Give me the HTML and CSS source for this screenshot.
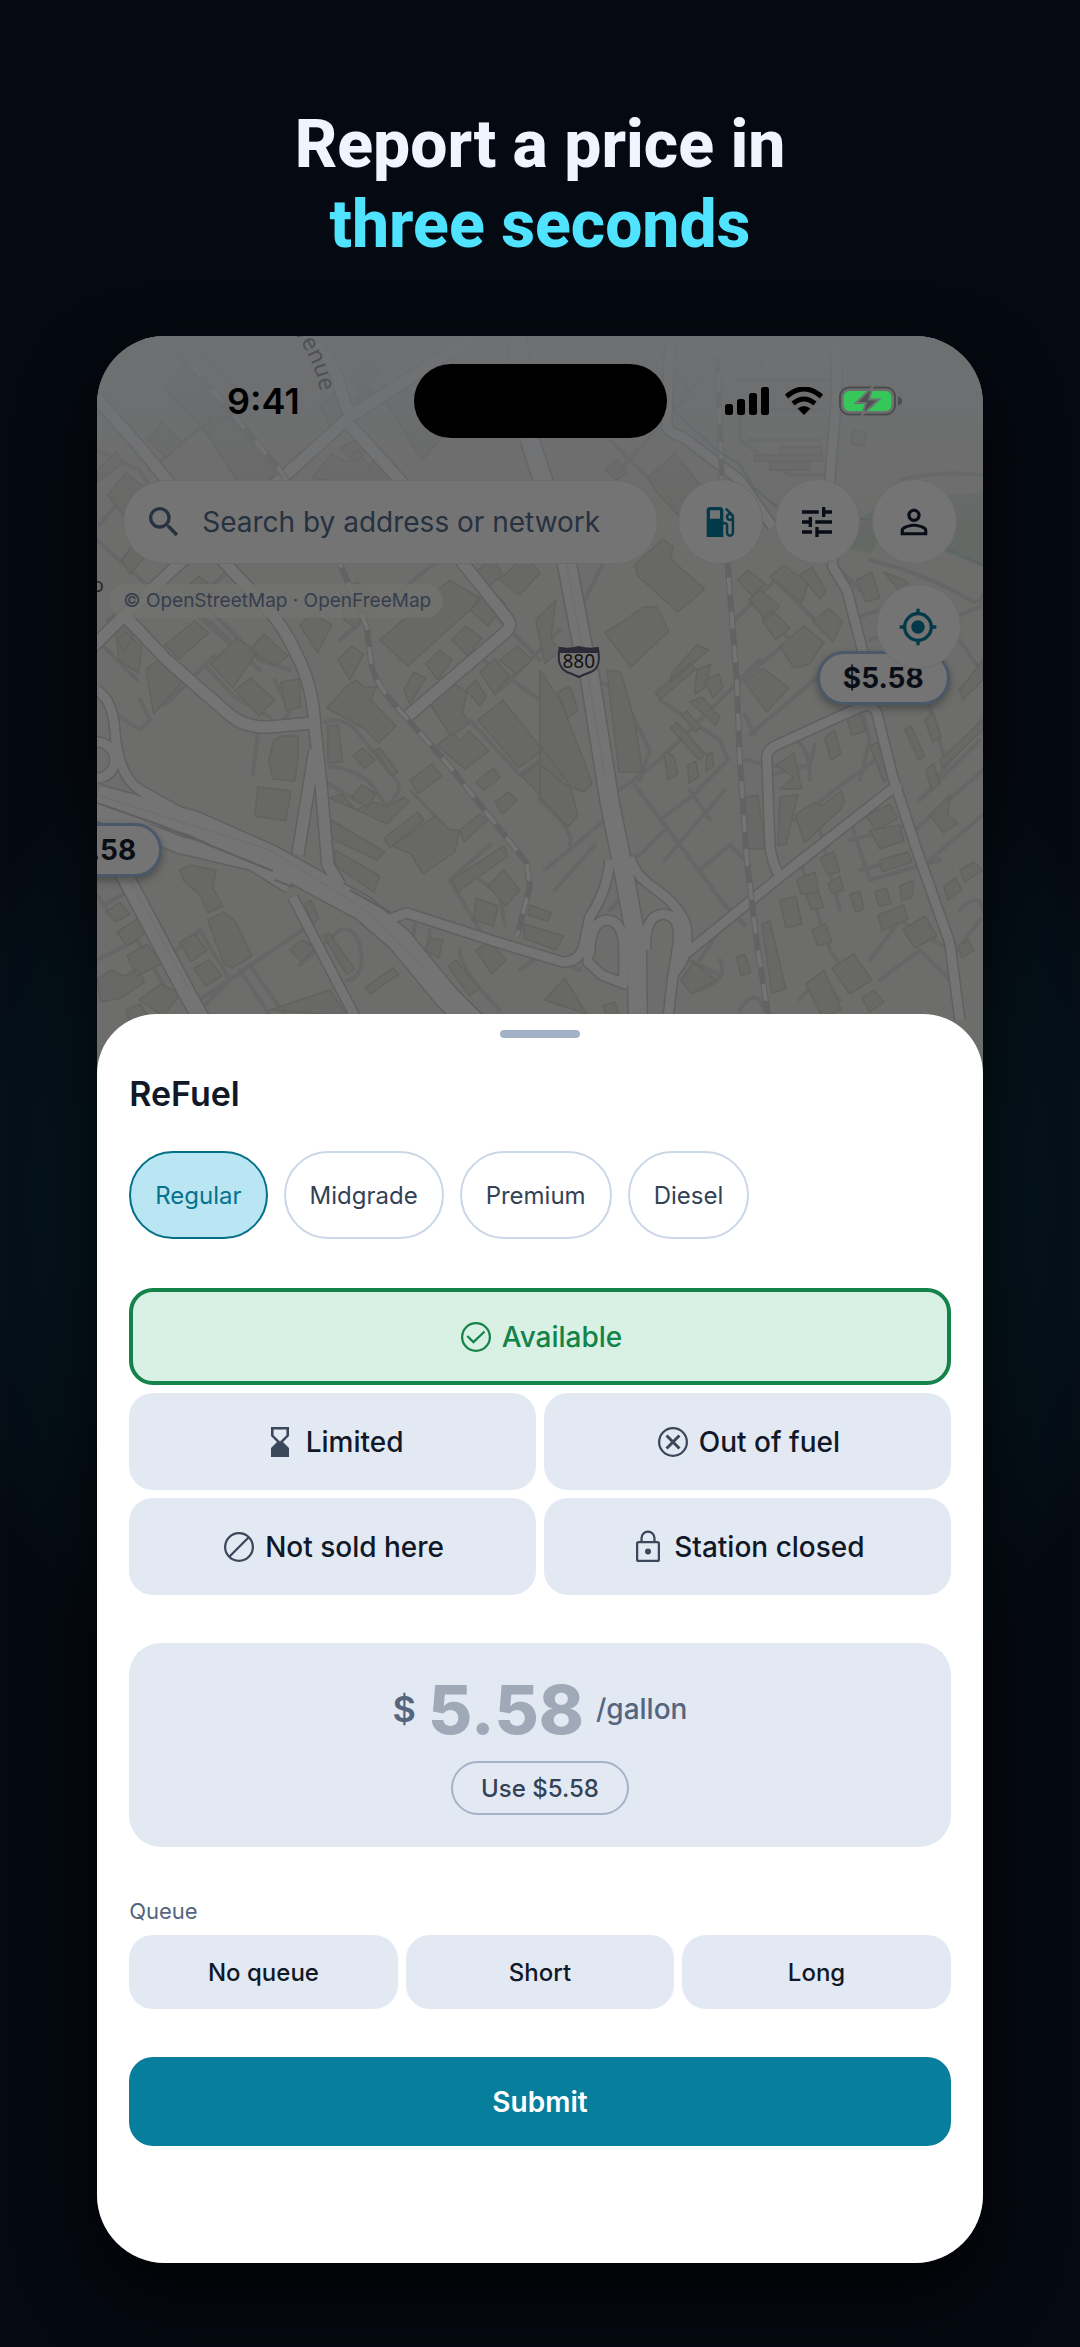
FILE: index.html
```html
<!DOCTYPE html>
<html lang="en">
<head>
<meta charset="utf-8">
<meta name="viewport" content="width=device-width, initial-scale=1">
<title>ReFuel – Report a price</title>
<link rel="stylesheet" href="styles.css">
</head>
<body>
<main class="promo">
  <h1 class="headline">Report a price in<br><span class="headline-accent">three seconds</span></h1>

  <div class="phone">
    <svg class="map" viewBox="97 336 886 760" preserveAspectRatio="xMidYMin slice" aria-hidden="true">
      <defs>
        <linearGradient id="fade" x1="0" y1="0" x2="0" y2="1">
          <stop offset="0" stop-color="#6e7073" stop-opacity=".9"/>
          <stop offset=".5" stop-color="#6e7073" stop-opacity=".5"/>
          <stop offset="1" stop-color="#6e7073" stop-opacity="0"/>
        </linearGradient>
        <!-- main streets, drawn once as casing and once as surface -->
        <g id="streets">
          <path class="street" d="M97 397L113 417 140 447 167 480 225 563 262 602Q285 627 297 655 313 685 315 727L322 793 328 865 340 885M90 650L127 613 180 563 280 480 350 417 473 337M350 425L400 480 463 563 507 618Q513 625 506 632L450 680 407 717M350 415Q340 390 337 375L313 337M127 618L167 660 230 715Q245 728 270 727L312 723M315 750L298 855"/>
          <path class="ramp" d="M97 690Q113 700 115 730 118 775 140 790L180 812M293 897L357 1020M97 742a16 16 0 0 1 0 36M387 920L407 913 500 943 563 962Q580 962 584 945L590 917Q608 890 610 860M630 857Q634 873 650 885 684 908 687 930L687 947Q685 960 673 975L668 1020M687 953L780 877 900 783M780 877Q771 860 770 843L767 758Q767 750 775 746L860 707Q872 702 877 713L893 777 917 850 950 943 960 1020M837 340L837 393 830 480 833 567 847 590 873 690M670 340L667 425Q667 433 683 437L740 480 773 527M590 955Q590 920 608 920 624 922 624 950L624 985M590 930L588 962 602 975 628 985M646 950Q644 915 664 914 682 916 678 945L672 985"/>
          <path class="avenue" d="M123 872L187 993 205 1025M97 812L180 845 253 862 290 885"/>
          <path class="highway" d="M97 797L193 823 270 857 320 885 363 908 400 940 447 997 485 1035"/>
          <path class="freeway" d="M517 337L530 440 543 480 567 563 583 647 590 677 610 803 623 867 637 943 638 1025"/>
        </g>
      </defs>

      <rect x="97" y="336" width="886" height="760" fill="#6d6d6b"/>
      <path fill="#656966" d="M860 520l20-16 103-12v75l-60-25-40-10-12 22-20-5z"/>

      <!-- service roads -->
      <g fill="none" stroke="#666" stroke-width="4" stroke-linecap="round" stroke-linejoin="round">
        <path d="M150 470L215 415 240 390M165 340L240 425 290 480M97 450L140 470 170 520M120 500l-20 25M230 470l20-35M190 340l60 60M97 540l50 45M140 700l10 20-10 10-30-20M165 705l50-50M205 665l30 32 35 20M258 735l-5 40M325 722q15-5 28 5l45 55q3 8-3 15-10 15-30 8l-38-22M330 767q15-2 40 15l15 22M97 895l15 20M105 905l25-15M97 960l40-20 30 50M165 960l35-30 30 50-30 30M200 1000l110-75M240 970l30 45M250 965l35 50M300 965l40-35q20-5 22 30-2 20-15 20M97 640l40 40M200 600l60 60 30 10M180 600l80 70M230 570l-40 35 40 35M275 680l15 30-10 20M340 640l40-35M390 600l60-50M400 660l50-60M480 600l60 60M500 690l60-60M540 700l-70-50M470 720l50 55 40-30M450 880l40-35M450 880l30 50M480 880l20 15 5 30M460 950q0 20 40 60M410 960l5-35M430 930l-5 40M520 970l20-15 40 15"/>
        <path d="M620 470l45-50 35-40M600 430l60 60 40 50M540 560l50-40M580 610l30-60M595 680l25 10 30 60-10 30M620 790l40-30 100-100M635 785l90 120 20 20M620 850q15 15 30-5l15-15M660 820l40-30M640 880l-30 30M545 870l60-50M555 890l40-45M540 800q35 30 30 45M700 960l20-30M700 990q30-10 20-30M660 700l60 40 8 20-30 30M690 790l20 30M725 790l-60 70M700 870l30-25 20 20M740 910l20-15M735 620l40-40 40 40M750 600l50 50M730 690l60-50M750 735l70-60M755 735l-10-20M770 775l40-10 5-20M745 760l40 8M790 740q20 0 20 40M795 820l80-60M860 780l10-40M870 740l-10-40M800 860l30 90 10 15M820 830l20 80M850 820l20 60 70-20M850 840l60-15M860 870l40-10M870 640l80-30M850 620l60-20 40 20 33-15M860 590l-30-30M900 480q40-10 83-5M860 530l40-20M870 560q60 15 100 40 10 5 13-5M920 800l60-60M915 830l68-60M930 860l53-45M925 690l20 70M935 780l48-60M960 640l20 30-20 20M870 960l30-40 50 30M880 980l40-30 40 40M800 1000q20-30 40 0M740 1010q15-25 25 0M690 960l30 15M960 910q20-20 23 0M950 960l30-40M690 390l-30-40M740 380h100M740 400v40l50 35h40M760 370v-30M740 410h85M750 440h70"/>
      </g>

      <!-- buildings -->
      <g fill="#686866" stroke="#62625f" stroke-width="1.5" stroke-linejoin="round">
        <path d="M163 387l22-22 46 46-22 24zM203 428l18-22 54 66-24 28zM148 440l14-18 20 20-15 16zM108 495l18-22 26 20-22 30zM97 470l20-18 6 12-26 18zM320 405l15-12 12 25-15 12zM350 375l20-15 10 12-20 18zM355 400l14-14 8 8-12 16zM385 400l22-12 45 40-30 32zM312 478l20-24 14 8 12-12 12 16 8-10 14 24-20 6zM340 448l18-10 10 14-14 10zM107 620l17-14 16 18-16 28zM122 560l10-14 12 12-14 16zM165 645l30-24 14 12-30 26zM117 640l10-7 15 14-3 26-20-12zM146 670l12-10 24 22-28 32zM211 664l26-26 20 14-24 36zM235 690l16-12 24 22-16 16zM250 650l14-16 24 22-12 10zM300 625l12-12 20 12-14 28zM183 590l16-14 20 16-16 18zM340 590l18-8 18 18-20 28-12-8zM380 640l70-60 30 18-12 14-60 54zM338 660l14-14 12 8-14 26zM452 640l14-14 16 12-14 18zM426 664l14-14 12 10-14 20zM470 610l20-20 16 14-18 22zM473 575l20-18 10 18-18 14zM500 580l25-25 15 18-20 22zM281 682l18-3 2 28-15 3zM327 708l20-22 10-6 8 8 12-2-6 14 25 26-17 17-14-14zM274 740l8-4h16v24l-3 21-22-2-4-18zM258 787l33 4-5 30-31-5zM328 726l10-1 5 37-15 1zM353 756l10-8 12 12-10 8zM375 750l5-2 18 24-6 4zM352 797l10-12 14 9-8 14zM330 798l12-4 14 16 18-8 14 5 16-10 5 5-22 22-30-14zM331 820l54 32-8 8-46-22zM335 850l45 26-6 16-38-26zM384 838l34-26 6 8-34 28zM410 790l40 40 10 0-5 22-32 22-12-20-18-8 42-30zM410 780l22-16 10 12-24 18zM460 830l20-16 8 6-24 22zM476 782l18-14 6 10-16 12zM495 802l14-10 8 8-14 14zM437 745l16-12 8 8 8-10 20 20-24 18zM478 720l25-20 40 50-24 18zM522 776l18-14 20 40-8 6zM429 702l26-18 12 8-4 20 6 12-18 12zM404 690l10-18 12 6-16 26zM466 690l10-10 10 16-6 10zM480 672l15-13 14 16-14 20zM500 660l18-14 14 14-16 14zM180 870l10-5 26 5-3 18 10 18-15 7-8-18-16-14zM208 920l16-8 12 10 16 34-20 12-8-4zM180 942l15-8 12 16-16 12zM194 968l16-8 12 16-16 10zM106 912l14-10 10 12-14 8zM117 932l22-14 10 6-4 10-18 12zM127 956l20-12 8 10 10 8-28 14zM97 980l14-10 14 6 12-8 8 14-24 16-20 4zM139 1000l22-16 20 10-18 22zM126 1010l14-6 8 12-18 6zM305 904l6-4 8 18-6 6zM324 936l5-3 26 36-8 6zM290 950l12-10 14 8-14 14zM270 1010l60-20 18 26zM452 880l52-34 4 10-50 36zM488 886l16-16 16 20-14 16zM476 898l22 8-4 20-20-6zM476 950l14-8 16 18-14 14zM448 966l8-6 24 28-10 8zM425 950l6-12 12 2-4 18zM365 988l28-20 6 6-28 20zM530 905l22 8-4 8-20-6zM524 924l40 12-8 14-32-12z"/>
        <path d="M649 477l26-24 30 38 8 0 18 24-25 30-52-56zM605 470l12-10 10 12-10 8zM635 565l28-26 10 8-2 12 34 30-27 23-40-36zM605 633l22-14 16-12h14l12 24-38 36zM536 620l20-20-5 40 10 10-16 14zM672 673l25-28 12 5-38 32zM655 693l35-30 6 6-35 30zM697 670l14-6-6 24-10 6zM738 580l10-10 18 14-14 12zM750 600l10-10 20 16-14 14zM762 620l10-10 18 18-14 12zM770 577l14-12 24 18-6 20zM813 622l16-14 14 14-10 20zM780 646l24-20 20 16-14 22-16 4zM800 575l12-8 14 24-6 8zM857 580l15-8 8 26-14 4zM884 572l20 8 18 18-20-4zM607 670l14 2 14 50 8 50-24 0zM540 670l20 30 24 60 8 24-8 8-20-8-24-20zM540 745l30 40 8 30-10 12-28-30zM558 692l12-6 8 24-10 8zM690 702l12-5 18 20-4 8zM705 680l14-6 4 14-10 10zM745 682l18-14 26 20-22 24zM671 728l6-6 28 32-6 6zM682 715l5-4 14 16-5 5zM664 752l10 4 4 18-10 6zM688 765l8-4 3 16-10 6zM707 755l5-3 2 14-8 6zM746 797l12-2 8 54h-18l-4-30zM776 765l18-12 8 36h-22l14-12zM780 797l18-2-12 50h-8zM795 815l18-12 10 2 18-14 4 10-4 8-36 34zM825 738l10-8 6 24-10 6zM846 716l14-5 6 20-14 4zM870 746l8-4 12 36-6 4zM866 816l24-12 8 14-22 12zM870 830l30-5 4 16-24 8zM880 860l28-8 4 10-30 10zM820 858l14-6 6 20-12 2zM797 880l18-8 4 20-18 2zM806 895l12-4 6 16-12 3zM828 884l12-8 4 14-12 3zM850 895l10-4 4 18-8 3zM875 892l12-4 4 16-12 2zM900 886l14-6-2 18-10 2zM780 900l16-4 6 28-16 4zM812 930l14-6 6 18-14 4zM878 915l26-10 4 14-26 12zM903 930l22-14 12 20-22 12zM832 968l22-14 18 26-22 14zM862 998l12-8 10 12-14 10zM806 984l18-14 18 40-20 6zM737 957l8-3 6 18-10 4zM762 924l8-3 16 68-14 4zM681 980l13-18 22 18-24 14zM545 1000l20-22 22 36zM603 1006l12-4 4 14h-12zM926 770l8-6 6 20-8 6zM930 815l20-20-2 20 10 8-14 10zM944 886l12-8 6 12-14 10zM960 870l14-8 9 8-18 12zM958 946l10-6 6 10-12 8zM755 455h68v6h-68zM780 455h42v-8h-42zM852 430l14 2-2 14-12-2zM770 470h40v-8h-40zM905 730l6-4 14 30-6 4zM925 720l8-8 8 24-8 6zM960 690l23-30v20l-20 20zM940 760l43-40v10l-40 38z"/>
      </g>

      <use class="casing" href="#streets"/>
      <use class="surface" href="#streets"/>
      <path fill="none" stroke="#6d6d6d" d="M97 795L270 850 363 908 430 975M566 560L588 677 606 780M130 880L190 990"/>
      <path fill="none" stroke="#5f5f5f" stroke-width="2" d="M97 803L160 825 273 871M275 880l18 7M350 890l40 22"/>

      <!-- railways -->
      <g fill="none">
        <path stroke="#626262" stroke-width="6" d="M717 340L722 480 728 567 737 680 740 760 747 860 757 943 770 1025M190 363L280 470 340 563 367 627 371 660Q373 680 395 705L447 763 527 863 530 887 517 937"/>
        <path stroke="#747474" stroke-width="4" stroke-dasharray="17 17" d="M717 340L722 480 728 567 737 680 740 760 747 860 757 943 770 1025M190 363L280 470 340 563 367 627 371 660Q373 680 395 705L447 763 527 863 530 887 517 937"/>
        <path stroke="#59656a" stroke-width="2" d="M673 410L717 450 738 463Q748 475 753 487L777 507 870 520 950 550 983 565"/>
      </g>

      <rect x="97" y="336" width="886" height="190" fill="url(#fade)"/>
      <path id="avenue" fill="none" d="M284 322Q314 350 322 400"/>
      <text class="map-label" fill="#505153" font-size="23"><textPath href="#avenue" startOffset="14">venue</textPath></text>
      <text class="map-label" fill="#2a2a2a" font-size="20" x="92" y="592">o</text>

      <path fill="#747474" stroke="#2b2b38" stroke-width="2" d="M560 648q8 3 19 0 11 3 19 0 4 20-7 24-8 3-12 5-6-3-12-5-11-6-7-24z"/>
      <path fill="#2b2b38" d="M560 647q9 2 19-1 10 3 19 1l1 6h-40z"/>
      <text class="map-label" fill="#111" font-size="19" x="579" y="668" text-anchor="middle">880</text>
    </svg>

    <div class="price-pin pin-right">$5.58</div>
    <div class="price-pin pin-left">$5.58</div>

    <header class="map-header">
      <div class="status-bar">
        <div class="status-side status-time">9:41</div>
        <div class="island"></div>
        <div class="status-side status-icons">
          <svg width="44" height="28" viewBox="0 0 44 28" aria-hidden="true">
            <rect y="17" width="8" height="11" rx="2.5"/><rect x="12" y="12" width="8" height="16" rx="2.5"/><rect x="24" y="6" width="8" height="22" rx="2.5"/><rect x="36" width="8" height="28" rx="2.5"/>
          </svg>
          <svg width="40" height="28" viewBox="0 0 40 28" aria-hidden="true">
            <g fill="none" stroke="#000" stroke-width="5"><path d="M2.500 9.500Q20-5.500 37.500 9.500"/><path d="M9 16.500Q20 7.500 31 16.500"/></g>
            <path d="M13.500 21.500q6.500-5 13 0L20 28z"/>
          </svg>
          <svg width="63" height="30" viewBox="0 0 63 30" aria-hidden="true">
            <rect x="1" y="1.500" width="55" height="27" rx="9" fill="none" stroke="#4b4c4d" stroke-width="2"/>
            <path d="M59 10.500q4 1 4 4.500t-4 4.500z" fill="#4b4c4d"/>
            <rect x="4.500" y="5" width="48" height="20" rx="6" fill="#35c759"/>
            <path d="M33.500 1L17 17h10l-4 12L40 13.500H30z" fill="#4f5051" stroke="#6f7071" stroke-width="2"/>
          </svg>
        </div>
      </div>

      <div class="search-row">
        <label class="search">
          <svg class="icon" viewBox="0 0 24 24" aria-hidden="true"><path d="M15.500 14h-.79l-.28-.27A6.471 6.471 0 0 0 16 9.500 6.500 6.500 0 1 0 9.500 16c1.610 0 3.090-.59 4.230-1.570l.27.28v.79l5 4.990L20.490 19l-4.990-5zm-6 0C7.010 14 5 11.990 5 9.500S7.010 5 9.500 5 14 7.010 14 9.500 11.990 14 9.500 14z"/></svg>
          <input class="search-input" type="search" placeholder="Search by address or network" aria-label="Search by address or network">
        </label>
        <button class="round-button accent" type="button" aria-label="Fuel type">
          <svg class="icon" viewBox="0 0 24 24" aria-hidden="true"><path d="M19.770 7.230l.01-.01-3.720-3.720L15 4.560l2.110 2.110c-.94.36-1.610 1.260-1.610 2.330 0 1.380 1.120 2.500 2.500 2.500.36 0 .69-.08 1-.21v7.210c0 .55-.45 1-1 1s-1-.45-1-1V14c0-1.100-.9-2-2-2h-1V5c0-1.100-.9-2-2-2H6c-1.100 0-2 .9-2 2v16h10v-7.500h1.500v5c0 1.380 1.120 2.500 2.500 2.500s2.500-1.120 2.500-2.500V9c0-.69-.28-1.320-.73-1.770zM12 10H6V5h6v5zm6 0c-.55 0-1-.45-1-1s.45-1 1-1 1 .45 1 1-.45 1-1 1z"/></svg>
        </button>
        <button class="round-button" type="button" aria-label="Filters">
          <svg class="icon" viewBox="0 0 24 24" aria-hidden="true"><path d="M3 17v2h6v-2H3zM3 5v2h10V5H3zm10 16v-2h8v-2h-8v-2h-2v6h2zM7 9v2H3v2h4v2h2V9H7zm14 4v-2H11v2h10zm-6-4h2V7h4V5h-4V3h-2v6z"/></svg>
        </button>
        <button class="round-button" type="button" aria-label="Profile">
          <svg class="icon" viewBox="0 0 24 24" aria-hidden="true"><path d="M12 5.900c1.160 0 2.100.94 2.100 2.100s-.94 2.100-2.100 2.100S9.900 9.160 9.900 8s.94-2.100 2.100-2.100m0 9c2.970 0 6.100 1.460 6.100 2.100v1.100H5.900V17c0-.64 3.130-2.100 6.100-2.100M12 4C9.790 4 8 5.790 8 8s1.790 4 4 4 4-1.790 4-4-1.790-4-4-4zm0 9c-2.670 0-8 1.340-8 4v3h16v-3c0-2.660-5.330-4-8-4z"/></svg>
        </button>
      </div>

      <div class="map-tools">
        <p class="attribution">© OpenStreetMap · OpenFreeMap</p>
        <button class="round-button accent" type="button" aria-label="My location">
          <svg class="icon" viewBox="0 0 24 24" aria-hidden="true"><path d="M12 8c-2.210 0-4 1.790-4 4s1.790 4 4 4 4-1.790 4-4-1.790-4-4-4zm8.940 3A8.994 8.994 0 0 0 13 3.060V1h-2v2.060A8.994 8.994 0 0 0 3.060 11H1v2h2.060A8.994 8.994 0 0 0 11 20.940V23h2v-2.060A8.994 8.994 0 0 0 20.940 13H23v-2h-2.060zM12 19c-3.870 0-7-3.130-7-7s3.130-7 7-7 7 3.130 7 7-3.130 7-7 7z"/></svg>
        </button>
      </div>
    </header>

    <form class="sheet">
      <div class="handle"></div>
      <h2 class="station">ReFuel</h2>

      <div class="grades" role="group" aria-label="Fuel grade">
        <button class="chip chip-selected" type="button" aria-pressed="true">Regular</button>
        <button class="chip" type="button" aria-pressed="false">Midgrade</button>
        <button class="chip" type="button" aria-pressed="false">Premium</button>
        <button class="chip" type="button" aria-pressed="false">Diesel</button>
      </div>

      <div class="states" role="group" aria-label="Availability">
        <button class="state state-selected" type="button" aria-pressed="true">
          <svg class="state-icon" viewBox="0 0 24 24" aria-hidden="true"><circle cx="12" cy="12" r="9.250"/><path d="M6.200 11.300l4.100 4.100 7.400-7.100"/></svg>
          Available
        </button>
        <button class="state" type="button" aria-pressed="false">
          <svg class="state-icon" viewBox="0 0 24 24" aria-hidden="true"><path class="solid" d="M18 22v-6l-4-4 4-4V2H6v6l4 4-4 4v6zM7.700 7.500V3.700h8.600v3.800L12 11.700z"/></svg>
          Limited
        </button>
        <button class="state" type="button" aria-pressed="false">
          <svg class="state-icon" viewBox="0 0 24 24" aria-hidden="true"><circle cx="12" cy="12" r="9.250"/><path class="bold" d="M7.700 7.700l8.600 8.600M16.300 7.700l-8.600 8.600"/></svg>
          Out of fuel
        </button>
        <button class="state" type="button" aria-pressed="false">
          <svg class="state-icon" viewBox="0 0 24 24" aria-hidden="true"><circle cx="12" cy="12" r="9.250"/><path d="M5.500 18.500l13-13"/></svg>
          Not sold here
        </button>
        <button class="state" type="button" aria-pressed="false">
          <svg class="state-icon" viewBox="0 0 24 24" aria-hidden="true"><rect x="4.750" y="8.750" width="14.500" height="12.500" rx="1"/><path d="M7.700 8.700V6a4.300 4.300 0 0 1 8.600 0v2.700"/><circle class="solid" cx="12" cy="15" r="2"/></svg>
          Station closed
        </button>
      </div>

      <div class="price-card">
        <label class="price-line">
          <span class="currency">$</span>
          <input class="price-input" type="text" inputmode="decimal" placeholder="5.58" aria-label="Price per gallon">
          <span class="unit">/gallon</span>
        </label>
        <button class="use-price" type="button">Use $5.58</button>
      </div>

      <div class="queue-title" id="queue-title">Queue</div>
      <div class="queue" role="group" aria-labelledby="queue-title">
        <button class="queue-option" type="button">No queue</button>
        <button class="queue-option" type="button">Short</button>
        <button class="queue-option" type="button">Long</button>
      </div>

      <button class="submit" type="submit">Submit</button>
    </form>
  </div>
</main>
</body>
</html>
```

FILE: styles.css
```css
* { box-sizing: border-box; }

body {
  margin: 0;
  background: #050911;
  font-family: Inter, "Liberation Sans", sans-serif;
  color: #111827;
}

button, input { font: inherit; color: inherit; }
button { margin: 0; padding: 0; border: 0; cursor: pointer; }

.promo {
  padding: 105px 9% 84px;
  background: radial-gradient(ellipse 62% 26% at 50% 51%, #04202b 0%, #04171f 60%, #050911 100%);
}

.headline {
  margin: 0 0 71px;
  font: 800 66px/80px Roboto, "Liberation Sans", sans-serif;
  text-align: center;
  color: #eff4ff;
}
.headline-accent { color: #4fe3ff; }

.phone {
  position: relative;
  overflow: hidden;
  border-radius: 68px;
  background: #6d6d6b;
  box-shadow: 0 32px 72px rgba(0, 0, 0, .8);
}

/* map */
.map {
  position: absolute;
  top: 0;
  left: 0;
  width: 100%;
  height: 760px;
}
.map-label { font-family: "Noto Sans", sans-serif; }

.casing, .surface { fill: none; stroke-linejoin: round; }
.casing { --edge: 3px; stroke: #606060; }
.surface { --edge: 0px; stroke: #747474; }
.street { stroke-width: calc(11px + var(--edge)); }
.ramp { stroke-width: calc(9px + var(--edge)); }
.avenue { stroke-width: calc(16px + var(--edge)); }
.highway { stroke-width: calc(24px + var(--edge)); }
.freeway { stroke-width: calc(18px + var(--edge)); }

.price-pin {
  position: absolute;
  width: 133px;
  height: 54px;
  border: 3px solid #4b586a;
  border-radius: 27px;
  background: #747474;
  box-shadow: 0 4px 8px rgba(0, 0, 0, .3);
  font-size: 28px;
  font-weight: 700;
  line-height: 48px;
  text-align: center;
  color: #090d15;
}
.pin-right { top: 315px; right: 33px; }
.pin-left { top: 487px; left: -68px; }

.map-header {
  position: relative;
  min-height: 678px;
  padding: 28px 26px 0;
}

.status-bar {
  display: grid;
  grid-template-columns: minmax(0, 1fr) 253px minmax(0, 1fr);
  align-items: center;
  height: 74px;
  margin-bottom: 41px;
}
.status-side {
  display: flex;
  align-items: center;
  justify-content: center;
}
.status-time {
  padding-right: 10px;
  font-size: 36px;
  font-weight: 600;
  color: #000;
}
.status-icons { gap: 15px; padding-left: 4px; }
.island {
  height: 74px;
  border-radius: 37px;
  background: #000;
}

.search-row {
  display: flex;
  align-items: center;
  gap: 12px;
}
.search {
  flex: 1;
  display: flex;
  align-items: center;
  gap: 18px;
  min-width: 0;
  height: 84px;
  margin-right: 8px;
  padding: 0 20px;
  border: 1px solid #6b6b6b;
  border-radius: 42px;
  background: #747474;
  color: #273140;
}
.search-input {
  flex: 1;
  min-width: 0;
  padding: 0;
  border: 0;
  outline: 0;
  background: none;
  appearance: none;
  font-size: 28px;
}
.search-input::placeholder { color: #273140; opacity: 1; }

.icon { flex: none; width: 40px; height: 40px; fill: currentColor; }

.round-button {
  display: grid;
  flex: none;
  place-items: center;
  width: 85px;
  height: 85px;
  border: 1px solid #6b6b6b;
  border-radius: 50%;
  background: #747474;
  color: #090d15;
}
.accent { color: #04394a; }

.map-tools {
  display: flex;
  align-items: flex-start;
  justify-content: space-between;
  margin: 20px -4px 0 -14px;
}
.attribution {
  margin: 0;
  padding: 0 12px 0 14px;
  border-radius: 18px;
  background: rgba(116, 115, 112, .7);
  font-size: 19px;
  line-height: 34px;
  color: #363e4d;
}

/* report sheet */
.sheet {
  position: relative;
  padding: 16px 32px 117px;
  border-radius: 60px 60px 0 0;
  background: #fff;
}
.handle {
  width: 80px;
  height: 8px;
  margin: 0 auto;
  border-radius: 4px;
  background: #a4b2c8;
}
.station {
  margin: 36px 0 37px;
  font-size: 34px;
  font-weight: 600;
  line-height: 40px;
}

.grades { display: flex; flex-wrap: wrap; gap: 16px; }
.chip {
  height: 88px;
  padding: 0 24px;
  border: 2px solid #cbd6e6;
  border-radius: 44px;
  background: #fff;
  font-size: 24px;
  color: #344256;
}
.chip-selected {
  border-color: #046f89;
  background: #b9e6f2;
  color: #07728d;
}

.states {
  display: grid;
  grid-template-columns: 1fr 1fr;
  gap: 8px;
  margin: 49px 0 48px;
}
.state {
  display: flex;
  align-items: center;
  justify-content: center;
  gap: 8px;
  height: 97px;
  border-radius: 24px;
  background: #e2e9f3;
  font-size: 28px;
  font-weight: 500;
}
.state-selected {
  grid-column: 1 / -1;
  border: 4px solid #13834a;
  background: #d9f1e4;
  color: #13834a;
}
.state-icon {
  width: 36px;
  height: 36px;
  fill: none;
  stroke: #3b475a;
  stroke-width: 1.5;
}
.state-icon .solid { fill: #3b475a; stroke: none; }
.state-icon .bold { stroke-width: 2; }
.state-selected .state-icon { stroke: #13834a; }

.price-card {
  display: flex;
  flex-direction: column;
  align-items: center;
  gap: 12px;
  padding: 26px 20px 32px;
  border-radius: 32px;
  background: #e2e9f3;
}
.price-line {
  display: flex;
  align-items: center;
  gap: 10px;
  height: 80px;
  color: #55657d;
}
.currency { font-size: 36px; font-weight: 600; }
.price-input {
  width: 160px;
  height: 80px;
  padding: 0;
  border: 0;
  outline: 0;
  background: none;
  font-size: 68px;
  font-weight: 800;
  text-align: center;
}
.price-input::placeholder { color: #9fa9b8; opacity: 1; }
.unit { font-size: 28px; font-weight: 500; }
.use-price {
  height: 54px;
  padding: 0 28px;
  border: 2px solid #a4b2c8;
  border-radius: 27px;
  background: none;
  font-size: 24px;
  font-weight: 500;
  color: #344256;
}

.queue-title {
  margin: 48px 0 8px;
  font-size: 22px;
  line-height: 32px;
  color: #55657d;
}
.queue {
  display: grid;
  grid-template-columns: repeat(3, 1fr);
  gap: 8px;
}
.queue-option {
  height: 74px;
  border-radius: 24px;
  background: #e2e9f3;
  font-size: 24px;
  font-weight: 500;
}

.submit {
  display: block;
  width: 100%;
  height: 89px;
  margin-top: 48px;
  border-radius: 24px;
  background: #077e9c;
  font-size: 28px;
  font-weight: 600;
  color: #fff;
}
```
